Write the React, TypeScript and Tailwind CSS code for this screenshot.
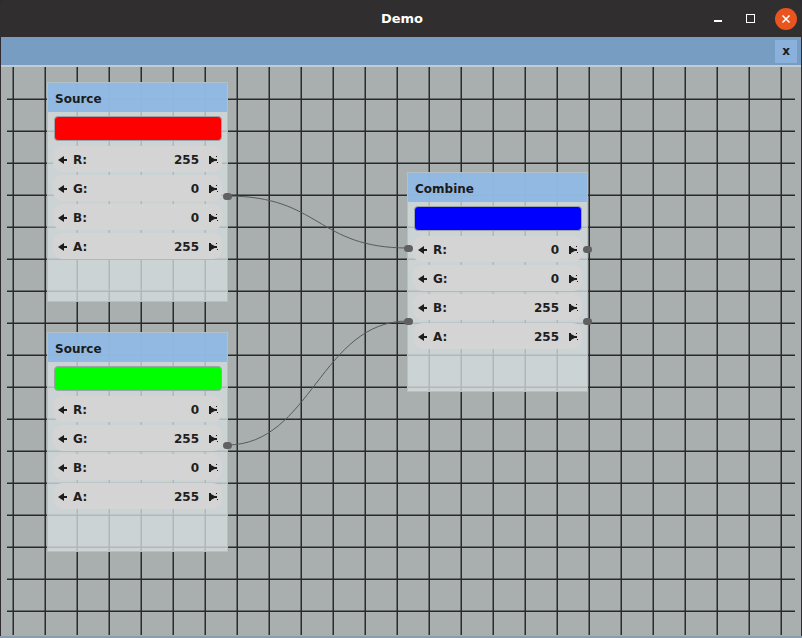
import React from "react";

type Row = { label: string; value: number };
type NodeProps = {
  title: string;
  color: string;
  left: number;
  top: number;
  rows: Row[];
};

const font = { fontFamily: '"DejaVu Sans", "Liberation Sans", sans-serif' };

function LeftArrow() {
  return (
    <svg width="10" height="8" viewBox="0 0 10 8" className="shrink-0">
      <polygon points="0,4 6,0 6,8" fill="#1c1c1c" />
      <rect x="6" y="3" width="3" height="2" fill="#1c1c1c" />
    </svg>
  );
}

function RightArrow() {
  return (
    <svg width="10" height="12" viewBox="0 0 10 12" className="shrink-0">
      <rect x="0" y="2" width="2" height="8" fill="#1c1c1c" />
      <polygon points="2,3 7.5,6 2,9" fill="#1c1c1c" />
      <rect x="2" y="5" width="6" height="2" fill="#1c1c1c" />
      <rect x="7" y="2" width="1" height="1" fill="#1c1c1c" />
      <rect x="8" y="8" width="1" height="1" fill="#1c1c1c" />
    </svg>
  );
}

function Node({ title, color, left, top, rows }: NodeProps) {
  return (
    <div
      className="absolute w-[181px] h-[220px] border border-[#b3c1c7] bg-[rgba(212,220,222,0.8)] flex flex-col"
      style={{ left, top }}
    >
      <div className="h-[29px] bg-[rgba(140,182,226,0.9)] flex items-center px-[7px] pt-[2px] text-[12px] font-bold text-[#1b1b1b]">
        {title}
      </div>
      <div className="px-[5px] pt-[4px] flex flex-col gap-[3px]">
        <div
          className="h-[25px] ml-[1px] rounded-[4px] border border-[#9aa4a8] mb-[2px]"
          style={{ background: color }}
        />
        {rows.map((r) => (
          <div
            key={r.label}
            className="h-[26px] rounded-[9px] bg-[#d4d4d4] flex items-center pl-[5px] pr-[3px] pt-[2px] text-[12px] font-bold text-[#1e1e1e]"
          >
            <LeftArrow />
            <span className="ml-[5px]">{r.label}</span>
            <span className="ml-auto mr-[10px]">{r.value}</span>
            <RightArrow />
          </div>
        ))}
      </div>
    </div>
  );
}

function Port({ x, y }: { x: number; y: number }) {
  return (
    <div
      className="absolute w-[9px] h-[7px] rounded-full bg-[#606060]"
      style={{ left: x - 4.5, top: y - 3.5 }}
    />
  );
}

export default function App() {
  const hLines: number[] = [];
  for (let y = 32; y <= 544; y += 32) hLines.push(y);
  const vLines: number[] = [];
  for (let x = 13; x <= 781; x += 32) vLines.push(x);
  const top = 67;

  return (
    <div className="w-[802px] h-[638px] bg-[#2e2a2f] flex flex-col overflow-hidden" style={font}>
      <div className="h-[37px] bg-[#302e2f] relative flex items-center justify-center text-white font-bold text-[13px] rounded-t-[6px]">
        <span className="pl-[2px]">Demo</span>
        <div className="absolute right-[5px] top-0 h-full flex items-center">
          <div className="w-[8px] h-[1.5px] bg-white mr-[24px] mt-[5px]" />
          <div className="w-[9px] h-[9px] border border-white mr-[20px]" />
          <div className="w-[22px] h-[22px] rounded-full bg-[#e9541f] flex items-center justify-center">
            <svg width="10" height="10" viewBox="0 0 10 10">
              <path d="M1.5 1.5 L8.5 8.5 M8.5 1.5 L1.5 8.5" stroke="white" strokeWidth="1.6" />
            </svg>
          </div>
        </div>
      </div>
      <div className="mx-[1px] h-[28px] bg-[#779dc3] flex justify-end items-center pr-[4px]">
        <div className="w-[22px] h-[23px] bg-[#89b1db] flex items-center justify-center text-[12px] font-bold text-[#1a1a1a]">
          x
        </div>
      </div>
      <div className="mx-[1px] h-[2px] bg-[#c3ccd0]" />
      <div className="mx-[1px] relative flex-1 bg-[#a9afaf]">
        <svg className="absolute inset-0" width="800" height="571">
          {hLines.map((y) => (
            <rect key={"h" + y} x={6} y={y - 0.5} width={788} height={1.5} fill="#282b2b" />
          ))}
          {vLines.map((x) => (
            <rect key={"v" + x} x={x - 1.5} y={0} width={1.5} height={568} fill="#282b2b" />
          ))}
          <path
            d={`M226 ${196 - top} C 320 ${196 - top}, 315 ${248 - top}, 407 ${248 - top}`}
            stroke="#555a5a"
            strokeWidth="1"
            fill="none"
          />
          <path
            d={`M226 ${445 - top} C 310 ${445 - top}, 320 ${321 - top}, 407 ${321 - top}`}
            stroke="#555a5a"
            strokeWidth="1"
            fill="none"
          />
        </svg>
        <Node
          title="Source"
          color="#ff0000"
          left={46}
          top={15}
          rows={[
            { label: "R:", value: 255 },
            { label: "G:", value: 0 },
            { label: "B:", value: 0 },
            { label: "A:", value: 255 },
          ]}
        />
        <Node
          title="Source"
          color="#00ff00"
          left={46}
          top={265}
          rows={[
            { label: "R:", value: 0 },
            { label: "G:", value: 255 },
            { label: "B:", value: 0 },
            { label: "A:", value: 255 },
          ]}
        />
        <Node
          title="Combine"
          color="#0000ff"
          left={406}
          top={105}
          rows={[
            { label: "R:", value: 0 },
            { label: "G:", value: 0 },
            { label: "B:", value: 255 },
            { label: "A:", value: 255 },
          ]}
        />
        <Port x={226} y={196 - top} />
        <Port x={226} y={445 - top} />
        <Port x={407} y={248 - top} />
        <Port x={407} y={321 - top} />
        <Port x={586} y={249 - top} />
        <Port x={586} y={321 - top} />
      </div>
      <div className="h-[2px] bg-[#8a9cb0]" />
    </div>
  );
}
